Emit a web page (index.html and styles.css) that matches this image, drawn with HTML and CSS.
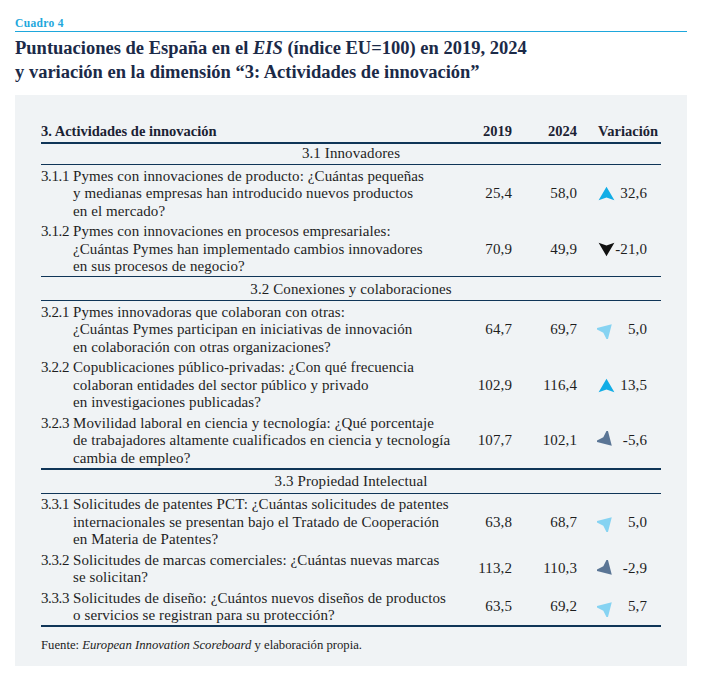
FILE: index.html
```html
<!DOCTYPE html>
<html lang="es">
<head>
<meta charset="utf-8">
<title>Cuadro 4</title>
<link rel="stylesheet" href="styles.css">
</head>
<body>
<svg class="defs" width="0" height="0" aria-hidden="true">
  <defs>
    <path id="ah" d="M0 -5.5 L6.5 5.5 L0 3.3 L-6.5 5.5 Z"/>
  </defs>
</svg>
<div class="page">
  <div class="label">Cuadro 4</div>
  <h1 class="title">Puntuaciones de España en el <em>EIS</em> (índice EU=100) en 2019, 2024<br>y variación en la dimensión “3: Actividades de innovación”</h1>
  <div class="panel">
    <table class="data">
      <colgroup>
        <col class="w-desc"><col class="w-2019"><col class="w-2024"><col class="w-var">
      </colgroup>
      <thead>
        <tr><th class="c-desc">3. Actividades de innovación</th><th class="c-num">2019</th><th class="c-num">2024</th><th class="c-varh">Variación</th></tr>
      </thead>
      <tbody>
        <tr class="sec first"><td colspan="4">3.1 Innovadores</td></tr>
        <tr>
          <td class="c-desc"><div class="item"><span class="code">3.1.1</span><span class="txt">Pymes con innovaciones de producto: ¿Cuántas pequeñas<br>y medianas empresas han introducido nuevos productos<br>en el mercado?</span></div></td>
          <td class="c-num">25,4</td><td class="c-num">58,0</td>
          <td class="c-var"><div class="var"><svg class="arr up" viewBox="-7 -7 14 14"><use href="#ah"/></svg><span>32,6</span></div></td>
        </tr>
        <tr class="last">
          <td class="c-desc"><div class="item"><span class="code">3.1.2</span><span class="txt">Pymes con innovaciones en procesos empresariales:<br>¿Cuántas Pymes han implementado cambios innovadores<br>en sus procesos de negocio?</span></div></td>
          <td class="c-num">70,9</td><td class="c-num">49,9</td>
          <td class="c-var"><div class="var"><svg class="arr down" viewBox="-7 -7 14 14"><use href="#ah" transform="rotate(180)"/></svg><span>-21,0</span></div></td>
        </tr>
        <tr class="sec"><td colspan="4">3.2 Conexiones y colaboraciones</td></tr>
        <tr>
          <td class="c-desc"><div class="item"><span class="code">3.2.1</span><span class="txt">Pymes innovadoras que colaboran con otras:<br>¿Cuántas Pymes participan en iniciativas de innovación<br>en colaboración con otras organizaciones?</span></div></td>
          <td class="c-num">64,7</td><td class="c-num">69,7</td>
          <td class="c-var"><div class="var"><svg class="arr diag upright" viewBox="-7 -7 14 14"><use href="#ah" transform="rotate(45)"/></svg><span>5,0</span></div></td>
        </tr>
        <tr>
          <td class="c-desc"><div class="item"><span class="code">3.2.2</span><span class="txt">Copublicaciones público-privadas: ¿Con qué frecuencia<br>colaboran entidades del sector público y privado<br>en investigaciones publicadas?</span></div></td>
          <td class="c-num">102,9</td><td class="c-num">116,4</td>
          <td class="c-var"><div class="var"><svg class="arr up" viewBox="-7 -7 14 14"><use href="#ah"/></svg><span>13,5</span></div></td>
        </tr>
        <tr class="last thick">
          <td class="c-desc"><div class="item"><span class="code">3.2.3</span><span class="txt">Movilidad laboral en ciencia y tecnología: ¿Qué porcentaje<br>de trabajadores altamente cualificados en ciencia y tecnología<br>cambia de empleo?</span></div></td>
          <td class="c-num">107,7</td><td class="c-num">102,1</td>
          <td class="c-var"><div class="var"><svg class="arr diag downright" viewBox="-7 -7 14 14"><use href="#ah" transform="rotate(135)"/></svg><span>-5,6</span></div></td>
        </tr>
        <tr class="sec"><td colspan="4">3.3 Propiedad Intelectual</td></tr>
        <tr>
          <td class="c-desc"><div class="item"><span class="code">3.3.1</span><span class="txt">Solicitudes de patentes PCT: ¿Cuántas solicitudes de patentes<br>internacionales se presentan bajo el Tratado de Cooperación<br>en Materia de Patentes?</span></div></td>
          <td class="c-num">63,8</td><td class="c-num">68,7</td>
          <td class="c-var"><div class="var"><svg class="arr diag upright" viewBox="-7 -7 14 14"><use href="#ah" transform="rotate(45)"/></svg><span>5,0</span></div></td>
        </tr>
        <tr>
          <td class="c-desc"><div class="item"><span class="code">3.3.2</span><span class="txt">Solicitudes de marcas comerciales: ¿Cuántas nuevas marcas<br>se solicitan?</span></div></td>
          <td class="c-num">113,2</td><td class="c-num">110,3</td>
          <td class="c-var"><div class="var"><svg class="arr diag downright" viewBox="-7 -7 14 14"><use href="#ah" transform="rotate(135)"/></svg><span>-2,9</span></div></td>
        </tr>
        <tr class="last thick">
          <td class="c-desc"><div class="item"><span class="code">3.3.3</span><span class="txt">Solicitudes de diseño: ¿Cuántos nuevos diseños de productos<br>o servicios se registran para su protección?</span></div></td>
          <td class="c-num">63,5</td><td class="c-num">69,2</td>
          <td class="c-var"><div class="var"><svg class="arr diag upright" viewBox="-7 -7 14 14"><use href="#ah" transform="rotate(45)"/></svg><span>5,7</span></div></td>
        </tr>
      </tbody>
    </table>
    <p class="source">Fuente: <em>European Innovation Scoreboard</em> y elaboración propia.</p>
  </div>
</div>
</body>
</html>
```

FILE: styles.css
```css
* { box-sizing: border-box; }
html, body { margin: 0; padding: 0; background: #ffffff; }
body {
  font-family: "Liberation Serif", "Times New Roman", serif;
  color: #1e1e1e;
}
.defs { position: absolute; width: 0; height: 0; overflow: hidden; }
.page {
  width: 672px;
  margin-left: 15px;
  padding-top: 16px;
}
.label {
  font-size: 11.5px;
  line-height: 14px;
  font-weight: bold;
  color: #1ea7dc;
  letter-spacing: 0.35px;
  padding-bottom: 1px;
  border-bottom: 1px solid #1ea7dc;
}
.title {
  margin: 4px 0 11px 0;
  font-size: 18.5px;
  line-height: 24px;
  font-weight: bold;
  color: #1b2a48;
}
.title em { font-weight: bold; font-style: italic; }
.panel {
  background: #f0f3f5;
  padding: 26px 26px 12px 26px;
}
.data {
  width: 620px;
  border-collapse: collapse;
  table-layout: fixed;
  font-size: 15px;
  line-height: 17.5px;
  letter-spacing: 0.1px;
}
.w-desc { width: 419px; }
.w-2019 { width: 52px; }
.w-2024 { width: 65px; }
.w-var { width: 84px; }
.data th {
  font-size: 14.5px;
  line-height: 17px;
  font-weight: bold;
  letter-spacing: 0;
  color: #1b2233;
  padding: 1.5px 0 2.5px 0;
  border-bottom: 2px solid #0f3557;
}
.data th.c-desc { text-align: left; }
.data th.c-num { text-align: right; }
.data th.c-varh { text-align: right; padding-right: 3px; }
.data td {
  padding: 2.5px 0 0.5px 0;
  vertical-align: middle;
  white-space: nowrap;
}
.data tr.sec td {
  text-align: center;
  padding: 3.5px 0 2px 0;
  border-bottom: 1px solid #0f3557;
}
.data tr.sec.first td { padding: 1px 0 1.5px 0; }
.data tr.last td { border-bottom: 1px solid #0f3557; }
.data tr.thick td { border-bottom: 2px solid #0f3557; }
.c-num { text-align: right; }
.item { display: flex; }
.code { width: 32px; flex: none; letter-spacing: -0.4px; }
.txt { flex: 1; }
.var {
  display: flex;
  align-items: center;
  justify-content: space-between;
  padding-left: 22px;
  padding-right: 14px;
}
.arr { width: 17px; height: 17px; display: block; margin-left: -1px; }
.arr.diag { width: 19px; height: 19px; margin-left: -2px; }
.arr.up { fill: #12ade6; }
.arr.down { fill: #111111; }
.arr.upright { fill: #86d3f2; }
.arr.downright { fill: #5a7595; }
.source {
  margin: 10px 0 0 0;
  font-size: 12.7px;
  line-height: 17px;
  color: #222222;
}
```
